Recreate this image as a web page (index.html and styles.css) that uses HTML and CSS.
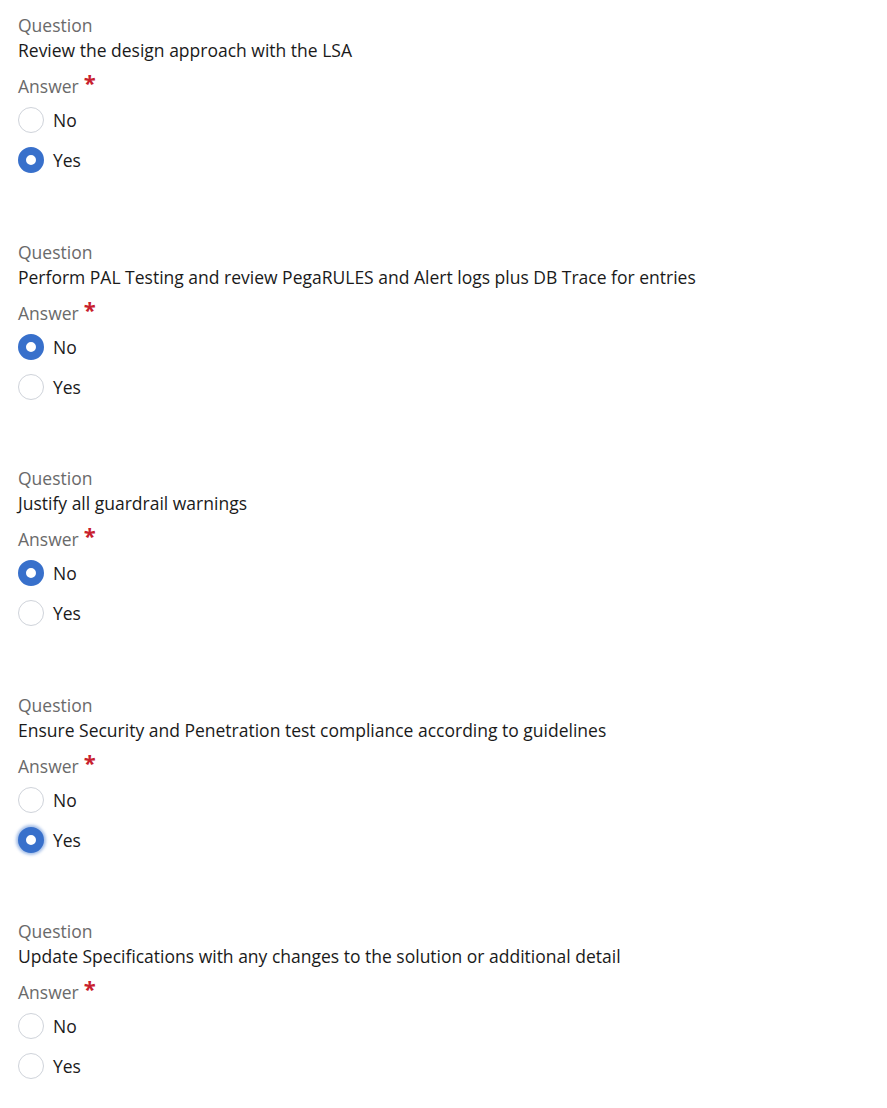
FILE: index.html
```html
<!DOCTYPE html>
<html>
<head>
<meta charset="utf-8">
<link rel="stylesheet" href="styles.css">
</head>
<body>
<div class="form">
  <div class="block">
    <div class="label">Question</div>
    <div class="text">Review the design approach with the LSA</div>
    <div class="label answer">Answer<span class="req">*</span></div>
    <div class="options">
      <label class="opt"><span class="radio"></span><span>No</span></label>
      <label class="opt"><span class="radio on"></span><span>Yes</span></label>
    </div>
  </div>
  <div class="block">
    <div class="label">Question</div>
    <div class="text">Perform PAL Testing and review PegaRULES and Alert logs plus DB Trace for entries</div>
    <div class="label answer">Answer<span class="req">*</span></div>
    <div class="options">
      <label class="opt"><span class="radio on"></span><span>No</span></label>
      <label class="opt"><span class="radio"></span><span>Yes</span></label>
    </div>
  </div>
  <div class="block">
    <div class="label">Question</div>
    <div class="text">Justify all guardrail warnings</div>
    <div class="label answer">Answer<span class="req">*</span></div>
    <div class="options">
      <label class="opt"><span class="radio on"></span><span>No</span></label>
      <label class="opt"><span class="radio"></span><span>Yes</span></label>
    </div>
  </div>
  <div class="block">
    <div class="label">Question</div>
    <div class="text">Ensure Security and Penetration test compliance according to guidelines</div>
    <div class="label answer">Answer<span class="req">*</span></div>
    <div class="options">
      <label class="opt"><span class="radio"></span><span>No</span></label>
      <label class="opt"><span class="radio on focus"></span><span>Yes</span></label>
    </div>
  </div>
  <div class="block">
    <div class="label">Question</div>
    <div class="text">Update Specifications with any changes to the solution or additional detail</div>
    <div class="label answer">Answer<span class="req">*</span></div>
    <div class="options">
      <label class="opt"><span class="radio"></span><span>No</span></label>
      <label class="opt"><span class="radio"></span><span>Yes</span></label>
    </div>
  </div>
</div>
</body>
</html>
```
FILE: styles.css
```css
html, body {
  margin: 0;
  padding: 0;
  background: #ffffff;
}
body {
  font-family: "Open Sans", "Liberation Sans", sans-serif;
  font-size: 17.5px;
  color: #1a1a1a;
}
.form {
  padding: 12px 18px 0 18px;
  display: flex;
  flex-direction: column;
  gap: 65.5px;
}
.block {
  display: flex;
  flex-direction: column;
}
.label {
  color: #6a6a6a;
  line-height: 26px;
  height: 26px;
}
.text {
  line-height: 25px;
  height: 25px;
  color: #1a1a1a;
}
.answer {
  margin-top: 10px;
  display: flex;
  align-items: flex-start;
}
.req {
  color: #c8202d;
  font-size: 22px;
  font-weight: 700;
  line-height: 22px;
  margin-left: 5px;
  margin-top: -2px;
}
.options {
  display: flex;
  flex-direction: column;
  gap: 14px;
  margin-top: 8px;
}
.opt {
  display: flex;
  align-items: center;
  gap: 9px;
  height: 26px;
}
.radio {
  box-sizing: border-box;
  width: 26px;
  height: 26px;
  border-radius: 50%;
  border: 1px solid #cfd3da;
  background: #fff;
  flex: none;
}
.radio.on {
  border: 8px solid #3870cb;
}
.radio.focus {
  box-shadow: 0 0 3px 2px rgba(56, 112, 203, 0.45);
}
```
